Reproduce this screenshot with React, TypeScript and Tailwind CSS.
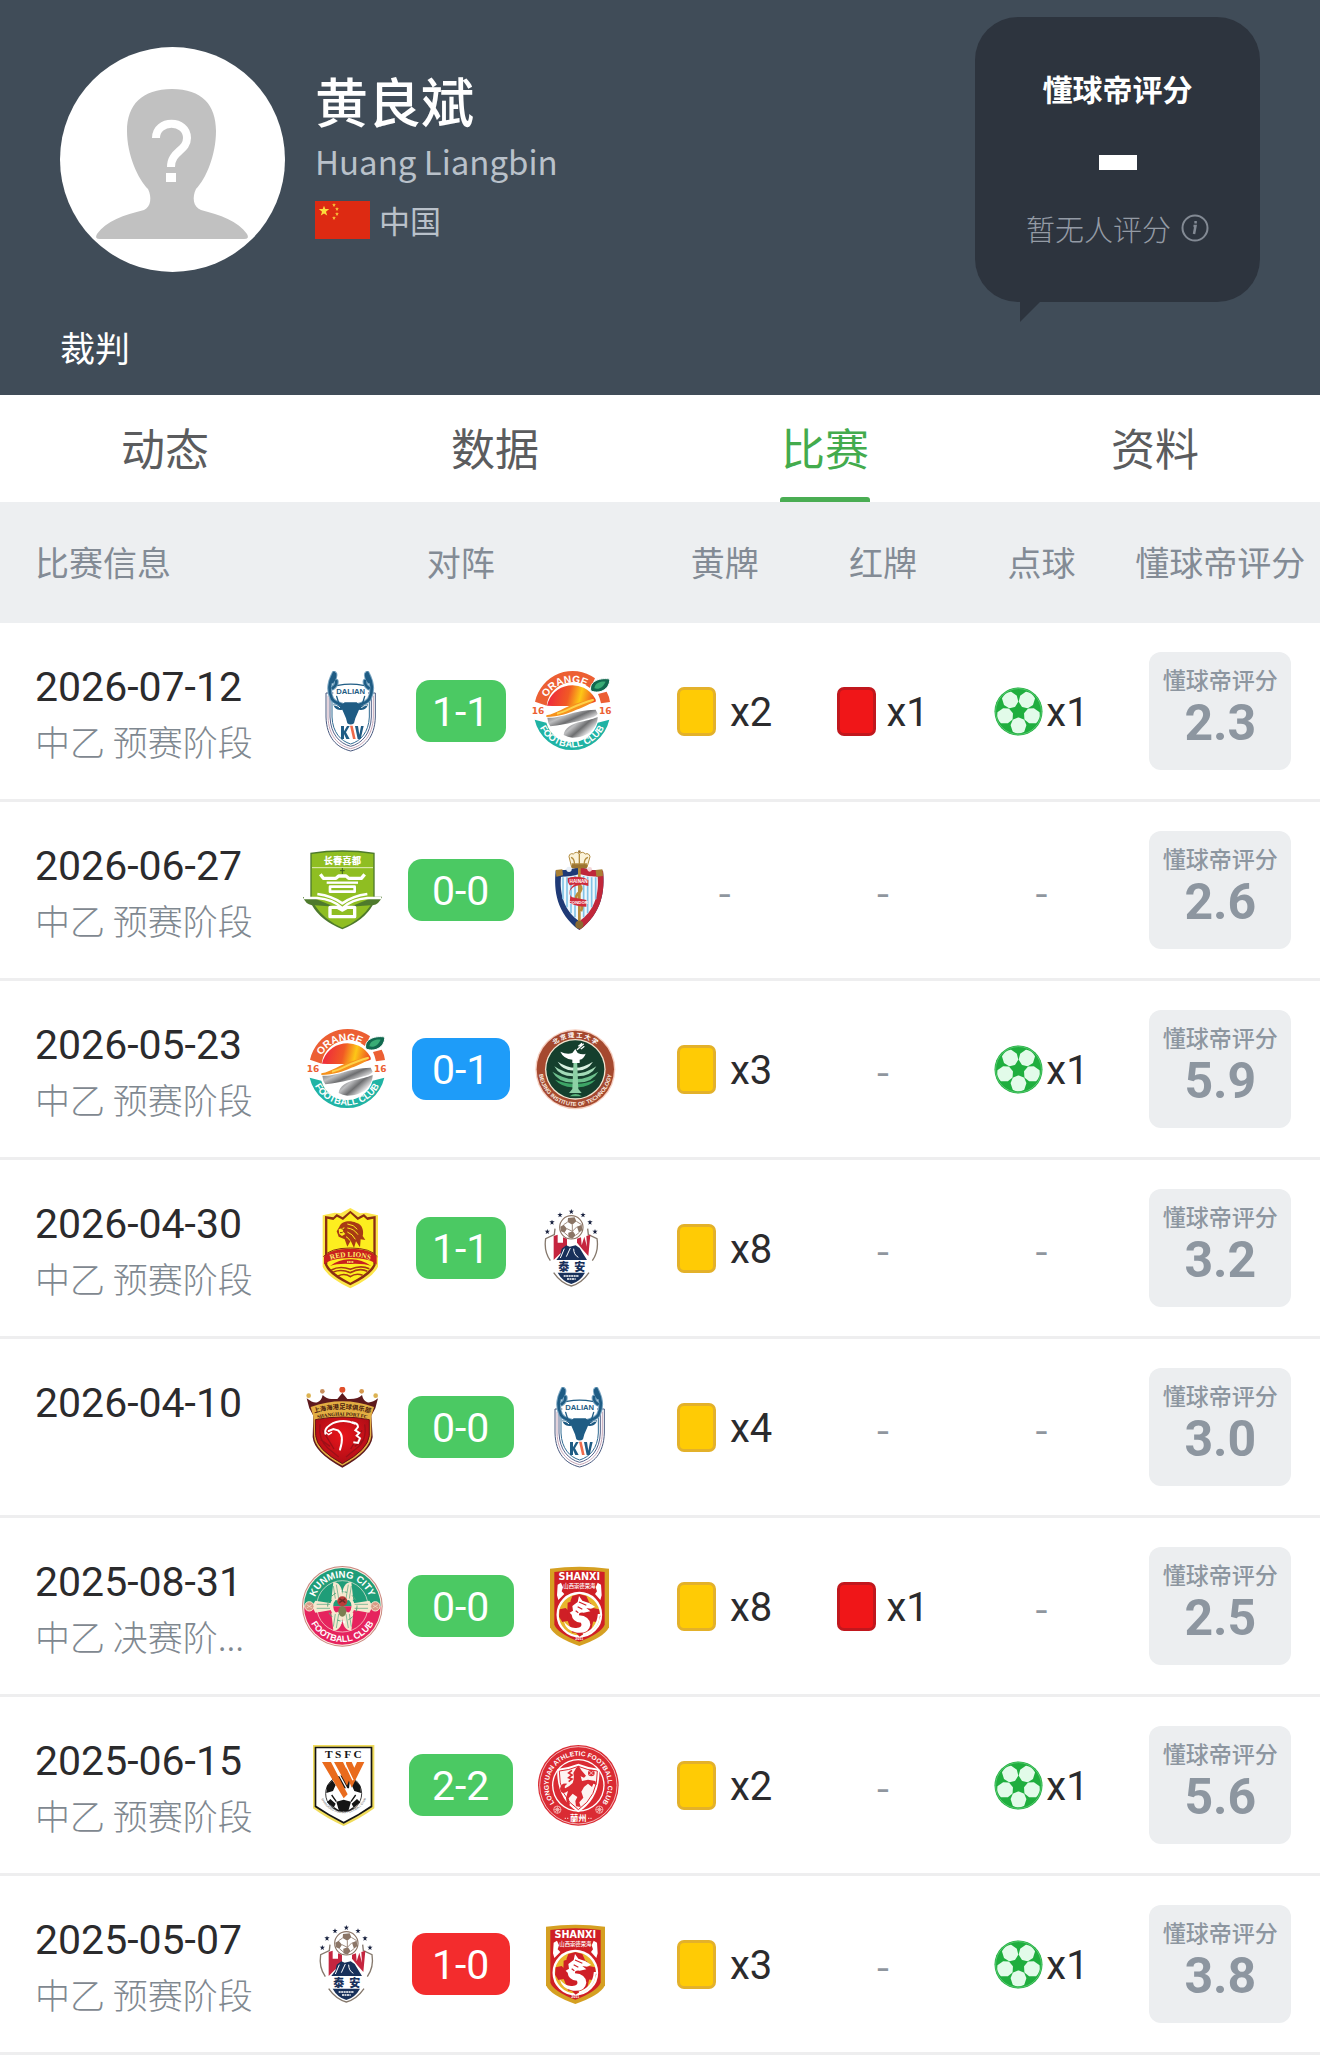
import { useId, type ReactNode } from 'react';

function Arc({ text, r, size, fill, cx = 121, cy = 121, bottom = false, family = 'Liberation Sans', weight = 700 }: {
  text: string; r: number; size: number; fill: string; cx?: number; cy?: number; bottom?: boolean; family?: string; weight?: number;
}) {
  const id = useId();
  const d = bottom
    ? `M${cx} ${cy - r}A${r} ${r} 0 0 0 ${cx} ${cy + r}A${r} ${r} 0 0 0 ${cx} ${cy - r}`
    : `M${cx} ${cy + r}A${r} ${r} 0 0 1 ${cx} ${cy - r}A${r} ${r} 0 0 1 ${cx} ${cy + r}`;
  return (
    <>
      <path id={id} d={d} fill="none" />
      <text fontSize={size} fontFamily={`${family}, Noto Sans CJK SC, sans-serif`} fontWeight={weight} fill={fill} textAnchor="middle">
        <textPath href={`#${id}`} startOffset="50%">{text}</textPath>
      </text>
    </>
  );
}

function Label({ x, y, size, fill, children, family = 'Liberation Sans', weight = 700 }: {
  x: number; y: number; size: number; fill: string; children: ReactNode; family?: string; weight?: number;
}) {
  return (
    <text x={x} y={y} fontSize={size} fill={fill} fontFamily={`${family}, Noto Sans CJK SC, sans-serif`} fontWeight={weight} textAnchor="middle">
      {children}
    </text>
  );
}

function Crest({ label, children }: { label: string; children: ReactNode }) {
  return (
    <svg viewBox="0 0 243 243" className="size-[81px] shrink-0" role="img" aria-label={label}>
      {children}
    </svg>
  );
}

function Dalian() {
  const antlers = 'M72 6C58 32 54 60 66 84C74 96 90 100 104 104M75 9C76 18 74 25 68 32M79 30C80 38 76 46 68 51M172 6C186 32 190 60 178 84C170 96 154 100 140 104M169 9C168 18 170 25 176 32M165 30C164 38 168 46 176 51';
  return (
    <Crest label="Dalian">
      <path d="M48 66H196V138C194 200 164 230 122 240C80 230 50 200 48 138Z" fill="#fff" />
      <path d="M48 66H70M174 66H196V138C194 200 164 230 122 240C80 230 50 200 48 138V66" fill="none" stroke="#49597f" strokeWidth="3" />
      <path d="M54 74V138C56 194 84 224 122 233C160 224 188 194 190 138V74" fill="none" stroke="#c6a4b6" strokeWidth="3" />
      <path d="M60 80V138C62 189 88 217 122 226C156 217 182 189 184 138V80" fill="none" stroke="#54628b" strokeWidth="3" />
      <path d="M66 90V138C68 184 92 210 122 219C152 210 176 184 178 138V90" fill="none" stroke="#2f6a92" strokeWidth="3" />
      <path d={antlers} fill="none" stroke="#7ba6c2" strokeWidth="14" strokeLinecap="round" strokeLinejoin="round" />
      <g fill="none" stroke="#1f5c84" strokeWidth="8" strokeLinecap="round" strokeLinejoin="round">
        <path d={antlers} />
        <path d="M84 43Q122 36 160 43M80 76L86 96M164 76L158 96" strokeWidth="4" />
      </g>
      <Label x={122} y={70} size={23} fill="#1f5c84">DALIAN</Label>
      <path d="M104 94H140L152 104L174 99C172 112 162 119 147 116L136 142L132 157Q122 164 112 157L108 142L97 116C82 119 72 112 70 99L92 104Z" fill="#1f5c84" />
      <path d="M72 102C80 103 86 106 90 111M172 102C164 103 158 106 154 111" stroke="#fff" strokeWidth="3" fill="none" />
      <path d="M93 165H102V181L111 165H119L108 184L119 204H109L102 189V204H93Z" fill="#1f5c84" />
      <path d="M120 164H128L137 204H129Z" fill="#ef6a4a" />
      <path d="M135 165H144L148 191L153 165H161L152 204H143Z" fill="#1f5c84" />
    </Crest>
  );
}

function Orange() {
  const a = useId();
  const b = useId();
  return (
    <Crest label="Orange Football Club">
      <defs>
        <linearGradient id={a} x1="0" y1="0.3" x2="1" y2="0.4">
          <stop offset="0.1" stopColor="#ee2f3b" />
          <stop offset="0.45" stopColor="#f15a24" />
          <stop offset="0.7" stopColor="#fdc716" />
          <stop offset="1" stopColor="#ee4d23" />
        </linearGradient>
        <linearGradient id={b} x1="0" y1="0" x2="1" y2="0.7">
          <stop offset="0" stopColor="#4a4a4c" />
          <stop offset="0.4" stopColor="#bdbec0" />
          <stop offset="0.6" stopColor="#6d6e70" />
          <stop offset="0.85" stopColor="#e6e6e7" />
          <stop offset="1" stopColor="#77787a" />
        </linearGradient>
      </defs>
      <path d="M12 92A116 119 0 0 1 192 22L178 52A80 80 0 0 0 47 104Z" fill="#ec5f33" />
      <path d="M201 69L227 62Q235 76 237 93L210 97Q207 82 201 69Z" fill="#ec5f33" />
      <path d="M11 146L46 155A80 80 0 0 0 200 155L235 146A115 118 0 0 1 11 146Z" fill="#20b3a4" />
      <path d="M48 104A78 78 0 0 1 192 82Q196 88 194 92C160 105 130 106 98 105Q72 106 48 104Z" fill={`url(#${a})`} />
      <path d="M46 133C80 126 100 108 132 98C156 92 180 84 190 84C184 98 160 108 136 116C110 128 84 136 46 138Z" fill="#f6921e" />
      <path d="M78 128C110 120 134 100 188 86" stroke="#fdd24b" strokeWidth="6" fill="none" />
      <path d="M49 140C100 142 120 118 194 116L200 128Q196 136 180 140C150 148 110 160 58 166Q50 156 49 140Z" fill={`url(#${b})`} />
      <path d="M98 192C100 170 122 158 150 152C172 148 192 142 200 138C200 170 172 200 124 200Q110 198 98 192Z" fill={`url(#${b})`} />
      <g transform="rotate(-16 123 122)">
        <Arc text="ORANGE" r={87} size={31} fill="#fff" cx={123} cy={122} />
      </g>
      <Arc text="FOOTBALL CLUB" r={109} size={28} fill="#fff" cx={123} cy={120} bottom />
      <Label x={21} y={130} size={27} fill="#ec5f33" family="DejaVu Sans">16</Label>
      <Label x={223} y={130} size={27} fill="#ec5f33" family="DejaVu Sans">16</Label>
      <path d="M180 60C172 36 200 18 236 24C238 50 210 72 180 60Z" fill="#11694f" stroke="#fff" strokeWidth="3" />
      <path d="M190 52C192 36 208 30 224 32C216 48 206 56 190 52Z" fill="#38ac75" />
    </Crest>
  );
}

function Changchun() {
  return (
    <Crest label="长春喜都">
      <path d="M25 8Q121 -6 218 8V140H240Q232 162 212 166Q186 212 121 238Q56 212 30 166Q10 162 3 141H25Z" fill="#4e7a2c" />
      <path d="M29 12Q121 -1 214 12V142L121 180L29 142Z" fill="#8fbe22" />
      <path d="M38 166L121 172L206 166Q176 212 121 233Q68 212 38 166Z" fill="#8fbe22" />
      <path d="M30 53H213" stroke="#f2f8d8" strokeWidth="2.5" />
      <Label x={121} y={42} size={28} fill="#fff" weight={900} family="Noto Sans CJK SC">长春喜都</Label>
      <g fill="none" stroke="#fff" strokeWidth="10" strokeLinejoin="round">
        <path d="M55 73L64 85H102L110 78H132L140 85H178L188 73" />
        <path d="M74 98H168" strokeWidth="7" />
        <path d="M84 110H158V125H84Z" strokeWidth="8" />
        <path d="M46 132Q90 138 121 160Q152 138 196 132" strokeWidth="8" />
        <path d="M6 144H46Q92 148 121 174Q150 148 196 144H237" strokeWidth="7" />
        <path d="M84 172V200H158V172H136L121 180L106 172Z" />
      </g>
      <path d="M121 54V72M114 62H128" stroke="#3f6222" strokeWidth="3" />
    </Crest>
  );
}

function Hainan() {
  return (
    <Crest label="Hainan Condor">
      <path d="M50 62Q86 62 121 52Q156 62 192 62C198 120 190 190 121 240C52 190 44 120 50 62Z" fill="#1f3a76" />
      <path d="M121 52Q156 62 192 62C198 120 190 190 121 240Z" fill="#c0273a" />
      <path d="M66 80Q98 80 121 72Q146 80 176 80C180 128 170 178 121 214C72 178 62 128 66 80Z" fill="#eef7fc" />
      <path d="M72 82V148M84 82V172M96 80V190M108 78V202M134 78V202M146 80V190M158 82V172M170 82V148" stroke="#83c3e6" strokeWidth="5" />
      <path d="M54 62L100 58V72L64 80Q52 76 54 62Z" fill="#1f3a76" />
      <path d="M50 60L70 58L72 76L52 80ZM170 60L190 58L192 78L172 80Z" fill="#a87f34" />
      <circle cx="90" cy="58" r="8" fill="#e8eef6" />
      <circle cx="152" cy="58" r="7" fill="#f2d4d6" />
      <path d="M117 54H125V220H117Z" fill="#b98d3a" />
      <path d="M112 100Q134 108 124 124Q104 138 116 156Q136 160 126 184" fill="none" stroke="#b98d3a" strokeWidth="8" />
      <path d="M86 84Q122 74 148 90V108Q122 98 92 106Q84 96 86 84Z" fill="#cf2c3b" />
      <path d="M130 104C96 106 82 128 100 142L142 150V170Q112 170 92 158L94 138Q82 118 112 100Z" fill="#cf2c3b" />
      <Label x={119} y={98} size={14} fill="#fff">HAINAN</Label>
      <Label x={118} y={163} size={13} fill="#fff">CONDOR</Label>
      <circle cx="121" cy="224" r="12" fill="#8a6a31" />
      <path d="M98 52L90 20Q92 8 103 12Q112 2 121 12Q130 2 139 12Q150 8 153 20L144 52Z" fill="#fbf3da" stroke="#b28b3e" strokeWidth="3" />
      <path d="M96 22Q108 26 106 46M121 12V46M147 22Q134 26 136 46M98 42H144" stroke="#b28b3e" strokeWidth="4" fill="none" />
      <rect x="98" y="43" width="46" height="12" rx="3" fill="#9c7430" />
      <circle cx="121" cy="5" r="4" fill="#9c7430" />
    </Crest>
  );
}

function Beijing() {
  return (
    <Crest label="Beijing Institute of Technology">
      <circle cx="121" cy="121" r="120" fill="#f6cfc0" />
      <circle cx="121" cy="121" r="116" fill="#a5492f" />
      <circle cx="121" cy="121" r="91" fill="#f3e6d2" />
      <circle cx="121" cy="121" r="87" fill="#153f2d" />
      <Arc text="北 京 理 工 大 学" r={96} size={19} fill="#fff" family="Noto Sans CJK SC" />
      <Arc text="BEIJING INSTITUTE OF TECHNOLOGY" r={110} size={17} fill="#fbeee2" bottom />
      <path d="M68 98Q96 116 121 116Q146 116 174 98Q156 128 121 124Q86 128 68 98Z" fill="#d8f0e0" />
      <path d="M58 112Q90 134 121 134Q152 134 184 112Q168 144 121 142Q74 144 58 112Z" fill="#a3dbb8" />
      <path d="M52 128Q90 152 121 150Q152 152 190 128Q170 164 121 160Q72 164 52 128Z" fill="#6dc08d" />
      <path d="M60 152Q96 166 121 164Q146 166 182 152Q158 178 121 174Q84 178 60 152Z" fill="#3da566" />
      <path d="M116 90H126L130 180L140 192H102L112 180Z" fill="#8cd0a5" />
      <path d="M104 202Q121 188 140 202Z" fill="#5ab57c" />
      <path d="M76 68Q96 78 112 72L121 60L128 72Q142 78 152 74Q146 90 134 92V102H112V92Q86 90 76 68Z" fill="#fff" />
      <path d="M126 62L146 44M130 52L138 46M138 60L148 52M134 58L140 42" stroke="#fff" strokeWidth="4" />
    </Crest>
  );
}

function RedLions() {
  return (
    <Crest label="Red Lions">
      <path d="M121 0L150 16L168 14L204 22V176Q190 208 121 241Q52 208 38 176V22L74 14L92 16Z" fill="#fce64a" />
      <path d="M121 8L144 28L162 18L172 28L197 24V172Q184 202 121 232Q58 202 45 172V24L70 28L80 18L98 28Z" fill="#8a2f12" />
      <path d="M121 16L143 36L161 26L172 36L190 32V170Q176 196 121 224Q66 196 52 170V32L70 36L81 26L99 36Z" fill="#fdee1f" />
      <path d="M88 56C94 38 122 36 138 44C158 48 162 70 158 84L166 96L152 94L150 118L138 100L132 120L122 98L112 116L104 94L86 86L80 70Z" fill="#a83a14" />
      <path d="M86 64L104 58L98 70L106 78L96 84L88 78Z" fill="#fdee1f" />
      <path d="M112 48Q132 50 142 64M112 60Q132 62 144 80M112 72Q128 78 136 94M108 86Q116 90 120 98" fill="none" stroke="#fdee1f" strokeWidth="3" />
      <path d="M94 62L104 65M90 74H98" stroke="#8a2f12" strokeWidth="3" />
      <path d="M42 146Q60 122 121 122Q182 122 200 146V170Q180 150 121 150Q62 150 42 170Z" fill="#c8201f" />
      <path d="M40 146Q60 120 121 120Q182 120 202 146" fill="none" stroke="#8a2f12" strokeWidth="3" />
      <Arc text="RED LIONS" r={190} size={22} fill="#fff06a" cy={336} family="Liberation Serif" />
      <path d="M60 174Q90 152 121 154Q152 152 184 174Q160 166 121 168Q82 166 60 174Z" fill="#c8201f" />
      <path d="M64 186Q90 172 121 184Q152 170 178 182M70 192Q94 182 121 194Q150 178 172 190M84 204Q104 194 121 206Q138 194 158 202" stroke="#a83a14" strokeWidth="5" fill="none" />
      <path d="M111 162H131" stroke="#fff06a" strokeWidth="5" strokeDasharray="4 1" />
    </Crest>
  );
}

const STAR = 'M0 -8L2 -3L8 -3L3 1L5 7L0 4L-5 7L-3 1L-8 -3L-2 -3Z';

function Taian() {
  return (
    <Crest label="泰安">
      {[[49, 71], [63, 43], [87, 21], [121, 11], [156, 21], [177, 43], [192, 71]].map(([x, y]) => (
        <path key={x} d={STAR} transform={`translate(${x} ${y})`} fill="#1a2340" />
      ))}
      <path d="M72 62L70 80L44 92Q38 130 58 158M170 62L172 80L198 92Q204 130 184 158M68 194Q90 226 121 234Q152 226 174 194" fill="none" stroke="#85786c" strokeWidth="4" />
      <path d="M68 84L80 80V104H96V88L108 92V116L68 156ZM138 92L150 88L152 112L160 86L168 116L166 84L178 80L172 144L156 126L138 104Z" fill="#c5253f" />
      <circle cx="121" cy="58" r="35" fill="#fff" stroke="#8b7566" strokeWidth="3.5" />
      <path d="M111 30L131 28L136 40L124 50L110 42ZM88 56L98 50L108 62L100 74L90 70ZM138 56L152 50L154 66L144 74ZM112 74L126 70L134 82L124 92L112 88Z" fill="#8b7566" />
      <path d="M124 50V70M110 42L98 50M136 40L152 50M108 62L124 70M138 56L124 70M100 74L112 84M144 74L134 82" stroke="#8b7566" strokeWidth="2.5" />
      <path d="M76 156L88 140L92 122L106 112L116 116L134 112L146 120L162 146L168 156Z" fill="#18305a" />
      <path d="M88 150L100 122M106 146L118 120M128 122Q128 140 142 148" stroke="#fff" strokeWidth="3" fill="none" />
      <Label x={98} y={189} size={33} fill="#18305a" weight={900} family="Noto Sans CJK SC">泰</Label>
      <Label x={146} y={189} size={33} fill="#18305a" weight={900} family="Noto Sans CJK SC">安</Label>
      <path d="M80 194H162Q148 220 121 228Q94 220 80 194Z" fill="#18305a" />
      <path d="M98 204H144M108 213H134" stroke="#fff" strokeWidth="4" strokeDasharray="6 1.5" />
    </Crest>
  );
}

function ShanghaiPort() {
  const g = useId();
  return (
    <Crest label="Shanghai Port FC">
      <defs>
        <radialGradient id={g} cx="0.5" cy="0.4" r="0.6">
          <stop offset="0" stopColor="#e8151b" />
          <stop offset="1" stopColor="#b00d16" />
        </radialGradient>
      </defs>
      <path d="M14 34Q34 50 46 46Q58 42 62 24Q76 38 92 36L106 36L121 18L136 36Q168 38 180 24Q184 42 196 46Q212 48 228 34L220 64L208 86L212 150Q206 196 121 242Q36 196 32 150L34 86L22 64Z" fill="#5e1a1d" />
      <path d="M26 60Q121 26 216 60L208 88L208 146Q204 192 121 236Q38 192 36 146L34 88Z" fill="#e2ae42" />
      <path d="M40 98Q121 82 202 98V146Q198 188 121 230Q44 188 41 146Z" fill={`url(#${g})`} stroke="#6b1414" strokeWidth="3" />
      <path d="M54 112Q48 158 78 184L110 210M62 130L96 186M188 112Q196 158 164 184L132 210M180 130L146 186M56 158L84 178M186 158L158 178" stroke="#9c1017" strokeWidth="4" fill="none" />
      <path d="M70 140Q66 126 84 114Q108 98 142 104L158 110M80 132L94 126L108 130Q128 144 114 188" stroke="#fff" strokeWidth="6" fill="none" strokeLinecap="round" />
      <path d="M71 136L80 143L90 136" stroke="#fff" strokeWidth="4" fill="none" />
      <path d="M150 106Q168 108 168 120L160 130L172 138L164 146L174 154L168 168L154 166" stroke="#fff" strokeWidth="6" fill="none" />
      <circle cx="121" cy="8" r="9" fill="#e0502c" />
      <circle cx="61" cy="13" r="7" fill="#c88e5c" />
      <circle cx="179" cy="13" r="7" fill="#d6984c" />
      <circle cx="20" cy="26" r="7" fill="#dcb353" />
      <circle cx="221" cy="26" r="7" fill="#dcb353" />
      <Arc text="上海海港足球俱乐部" r={290} size={19} fill="#4a1a0e" cy={356} family="Noto Sans CJK SC" />
      <Arc text="SHANGHAI PORT FC" r={330} size={15} fill="#3a120c" cy={416} family="Liberation Serif" />
    </Crest>
  );
}

function Kunming() {
  const wing = 'M120 92Q122 48 148 48L154 102Q138 100 128 108Z';
  return (
    <Crest label="Kunming City Football Club">
      <circle cx="121" cy="121" r="121" fill="#c9867d" />
      <circle cx="121" cy="121" r="118" fill="#fbeee4" />
      <path d="M6 121A115 115 0 0 1 236 121Z" fill="#1f9d78" />
      <path d="M6 121A115 115 0 0 0 236 121Z" fill="#e6235e" />
      <circle cx="121" cy="121" r="77" fill="none" stroke="#f9ecdc" strokeWidth="2" />
      <Arc text="KUNMING CITY" r={86} size={29} fill="#fff" />
      <Arc text="FOOTBALL CLUB" r={107} size={27} fill="#fff" bottom />
      <g fill="#f6e8cf">
        <path d={wing} />
        <path d={wing} transform="translate(242 0) scale(-1 1)" />
        <path d={wing} transform="translate(0 242) scale(1 -1)" />
        <path d={wing} transform="translate(242 242) scale(-1 -1)" />
        <path d="M40 104L88 112V132L40 140L30 121Z" />
        <path d="M202 104L154 112V132L202 140L212 121Z" />
      </g>
      <circle cx="121" cy="121" r="32" fill="none" stroke="#f6e8cf" strokeWidth="9" />
      <circle cx="121" cy="121" r="44" fill="none" stroke="#5aa87a" strokeWidth="3" strokeDasharray="16 18" />
      <path d="M139 56L132 98M148 60L142 98M103 56L110 98M94 60L100 98M139 186L132 144M148 182L142 144M103 186L110 144M94 182L100 144M44 115H84M44 127H84M158 115H198M158 127H198" stroke="#4aa37c" strokeWidth="2" />
      <ellipse cx="121" cy="106" rx="15" ry="15" fill="#bb3b39" />
      <ellipse cx="121" cy="136" rx="12" ry="16" fill="#7b7e50" />
      <path d="M112 98L130 110M130 98L112 110" stroke="#6e2a29" strokeWidth="4" />
      <circle cx="22" cy="121" r="14" fill="#d99a86" stroke="#f6e8cf" strokeWidth="3" />
      <circle cx="220" cy="121" r="14" fill="#d99a86" stroke="#f6e8cf" strokeWidth="3" />
      <path d="M14 116L30 126M30 116L14 126M212 116L228 126M228 116L212 126" stroke="#f6e8cf" strokeWidth="2" />
      <path d="M116 72V80M126 72V80M115 164H119V168H115V172H119M124 164V169H129M128 164V173" stroke="#fff" strokeWidth="2.5" fill="none" />
    </Crest>
  );
}

function Shanxi() {
  return (
    <Crest label="Shanxi">
      <path d="M33 8Q121 -4 210 8V184Q196 214 121 240Q46 214 33 184Z" fill="#d5a022" />
      <path d="M46 18Q121 8 197 18V176Q186 202 121 227Q56 202 46 176Z" fill="#cf1f26" />
      <Label x={121} y={41} size={29} fill="#fff" family="DejaVu Sans">SHANXI</Label>
      <Label x={121} y={67} size={16} fill="#fff" weight={500} family="Noto Sans CJK SC">山西崇德荣海</Label>
      <path d="M56 56L66 50L72 64L68 76L76 84L58 102L54 88ZM186 56L176 50L170 64L174 76L168 84L184 102L188 88Z" fill="#fff" />
      <circle cx="121" cy="146" r="65" fill="#e8b62c" stroke="#fff" strokeWidth="7" />
      <path d="M121 84L142 90L150 108L130 122H112L94 106L100 90ZM62 130L80 126L96 142L90 164L70 168L60 152ZM180 130L162 126L150 140L156 166L174 168L184 152Z" fill="#cf1f26" />
      <path d="M92 182L112 166L140 172L150 192L122 212Z" fill="#cf1f26" />
      <path d="M86 110L120 98L156 112L166 150L156 196L100 200L84 160Z" fill="#cf1f26" />
      <path d="M100 120L116 108L120 90L130 104L152 112L168 122L156 128L142 126L154 136L134 140Q118 138 120 148Q152 150 154 176Q150 204 114 200Q82 196 74 166Q90 188 112 186Q132 184 126 170Q100 168 98 146L92 140L102 134Z" fill="#fff" />
      <path d="M120 108L142 118M116 122L130 130M110 134L118 140" stroke="#cf1f26" strokeWidth="3.5" />
      <path d="M132 206Q176 192 180 144" stroke="#fff" strokeWidth="7" fill="none" />
      <Label x={121} y={222} size={11} fill="#fff">2011</Label>
    </Crest>
  );
}

function Tsfc() {
  return (
    <Crest label="TSFC">
      <path d="M30 0H214V190Q170 222 122 243Q74 222 30 190Z" fill="#f0dc5c" />
      <path d="M35 5H208V186Q166 214 122 236Q78 214 35 186Z" fill="#151515" />
      <path d="M40 10H203V182Q164 210 122 230Q80 210 40 182Z" fill="#fff" />
      <circle cx="122" cy="146" r="54" fill="#fff" stroke="#151515" strokeWidth="2.5" />
      <path d="M72 122L88 106L98 120L90 138L70 144ZM172 122L156 106L146 120L154 138L174 144ZM122 164L144 170L136 198L108 198L100 170ZM72 172L82 162L98 176L92 188ZM172 172L162 162L146 176L152 188ZM104 96L124 90L142 98L138 130H108Z" fill="#151515" />
      <path d="M100 170L86 150M144 170L158 150M108 198L92 188M136 198L152 188" stroke="#151515" strokeWidth="4" />
      <path d="M57 51H84L134 148L122 160ZM93 51H120L142 96L132 122ZM129 51H146L154 68L162 51H184L146 128L132 92Z" fill="#e96b1d" />
      <path d="M88 51L142 150M124 51L150 106" stroke="#fff" strokeWidth="4" />
      <Label x={121} y={38} size={34} fill="#151515" family="Liberation Serif">T S F C</Label>
      <Arc text="SHANDONG TAISHAN FOOTBALL CLUB" r={73} size={9} fill="#555" cx={122} cy={132} bottom weight={400} />
    </Crest>
  );
}

function Longyuan() {
  return (
    <Crest label="Longyuan Athletic Football Club">
      <circle cx="121" cy="121" r="121" fill="#da2b33" />
      <circle cx="121" cy="121" r="116" fill="none" stroke="#fff" strokeWidth="2" />
      <circle cx="121" cy="121" r="79" fill="#fff" />
      <circle cx="121" cy="121" r="75" fill="#da2b33" />
      <Arc text="LONGYUAN ATHLETIC FOOTBALL CLUB" r={89} size={20} fill="#fff" />
      <path d="M58 72Q90 68 121 56Q152 68 184 72Q188 160 121 202Q54 160 58 72Z" fill="#fff" />
      <path d="M64 78Q92 76 121 64Q150 76 178 78Q180 154 121 194Q62 154 64 78Z" fill="#fdf4f2" stroke="#da2b33" strokeWidth="3" />
      <path d="M114 70L122 62L130 76L144 92L138 98L128 94L132 108L150 104L172 108L176 120L166 116L162 126L150 116L138 126L130 140L136 158L124 172L128 186L114 184L112 168L118 156L104 146L92 160L96 178L88 184L84 160L90 138Q70 152 66 132Q68 112 88 116Q76 124 82 130Q92 126 104 114Q110 98 106 84Z" fill="#da2b33" />
      <path d="M102 76L92 84L102 90L92 98L102 102L92 110" stroke="#da2b33" strokeWidth="5" fill="none" />
      <circle cx="160" cy="84" r="10" fill="#da2b33" />
      <path d="M154 78L166 90M166 78L154 90" stroke="#fff" strokeWidth="2" />
      {[[58, 194], [184, 194]].map(([x, y]) => (
        <g key={x} fill="none" stroke="#f4b9b6" strokeWidth="2.5">
          <circle cx={x} cy={y} r="11" />
          <circle cx={x} cy={y} r="4" />
          <path d={`M${x - 11} ${y}H${x + 11}M${x} ${y - 11}V${y + 11}M${x - 7} ${y - 7}L${x + 7} ${y + 7}M${x + 7} ${y - 7}L${x - 7} ${y + 7}`} />
        </g>
      ))}
      <Label x={121} y={229} size={25} fill="#fff" family="Noto Sans CJK TC">蘭州</Label>
      <path d="M80 220H92M150 220H162" stroke="#f4b9b6" strokeWidth="4" strokeDasharray="4 3" />
    </Crest>
  );
}

function Ball() {
  return (
    <svg viewBox="0 0 50 50" className="size-[49px] shrink-0" aria-hidden="true">
      <circle cx="25" cy="25" r="24.5" fill="#1fae3e" />
      <circle cx="25" cy="25" r="23.4" fill="none" stroke="#62cf7a" strokeWidth="0.8" />
      {[0, 72, 144, 216, 288].map((a) => (
        <path
          key={a}
          transform={`rotate(${a} 25 25)`}
          d="M20 34L25 32L30 34L32 39L30 45Q25 47.500 20 45L18 39Z"
          fill="#e2fbe9"
          stroke="#e2fbe9"
          strokeWidth="2"
          strokeLinejoin="round"
        />
      ))}
    </svg>
  );
}

function Flag() {
  return (
    <svg viewBox="0 0 55 38" className="h-[38px] w-[55px] shrink-0" role="img" aria-label="中国国旗">
      <rect width="55" height="38" fill="#dd2a12" />
      <path d={STAR} transform="translate(9 10) scale(0.65)" fill="#fbdc3c" />
      {[[19, 4], [22, 8], [22, 13], [19, 17]].map(([x, y]) => (
        <path key={y} d={STAR} transform={`translate(${x} ${y}) scale(0.24)`} fill="#fbc93c" />
      ))}
    </svg>
  );
}

function Avatar() {
  return (
    <svg viewBox="0 0 225 225" className="size-[225px] shrink-0" role="img" aria-label="头像">
      <circle cx="112.500" cy="112.500" r="112.500" fill="#fff" />
      <path d="M112 42C82 42 67 58 67 84C67 108 78 132 88 142C92 150 91 160 84 163C64 168 46 174 37 187Q34 192 40 192H184Q190 192 187 187C178 174 160 168 141 163C133 160 132 150 136 142C146 132 156 108 156 84C156 58 142 42 112 42Z" fill="#c1c1c1" />
      <path d="M96 91C96 72 127 72 127 91C127 104 111 104 111 120" fill="none" stroke="#fff" strokeWidth="8" />
      <rect x="106" y="126" width="10" height="9" fill="#fff" />
    </svg>
  );
}

type Match = {
  date: string; stage: string; home: () => ReactNode; away: () => ReactNode;
  score: string; badge: string; yellow?: number; red?: number; penalty?: number; rating: string;
};

const MATCHES: Match[] = [
  { date: '2026-07-12', stage: '中乙 预赛阶段', home: Dalian, away: Orange, score: '1-1', badge: 'w-[90px] bg-[#4bc963]', yellow: 2, red: 1, penalty: 1, rating: '2.3' },
  { date: '2026-06-27', stage: '中乙 预赛阶段', home: Changchun, away: Hainan, score: '0-0', badge: 'w-[106px] bg-[#4bc963]', rating: '2.6' },
  { date: '2026-05-23', stage: '中乙 预赛阶段', home: Orange, away: Beijing, score: '0-1', badge: 'w-[98px] bg-[#1e9cf9]', yellow: 3, penalty: 1, rating: '5.9' },
  { date: '2026-04-30', stage: '中乙 预赛阶段', home: RedLions, away: Taian, score: '1-1', badge: 'w-[90px] bg-[#4bc963]', yellow: 8, rating: '3.2' },
  { date: '2026-04-10', stage: '', home: ShanghaiPort, away: Dalian, score: '0-0', badge: 'w-[106px] bg-[#4bc963]', yellow: 4, rating: '3.0' },
  { date: '2025-08-31', stage: '中乙 决赛阶...', home: Kunming, away: Shanxi, score: '0-0', badge: 'w-[106px] bg-[#4bc963]', yellow: 8, red: 1, rating: '2.5' },
  { date: '2025-06-15', stage: '中乙 预赛阶段', home: Tsfc, away: Longyuan, score: '2-2', badge: 'w-[104px] bg-[#4bc963]', yellow: 2, penalty: 1, rating: '5.6' },
  { date: '2025-05-07', stage: '中乙 预赛阶段', home: Taian, away: Shanxi, score: '1-0', badge: 'w-[98px] bg-[#f32c2d]', yellow: 3, penalty: 1, rating: '3.8' },
];

const TABS = ['动态', '数据', '比赛', '资料'];

function Stat({ value, children, gap }: { value?: number; children: ReactNode; gap: string }) {
  if (!value) {
    return (
      <td className="border-b-3 border-[#eeeeef] p-0 text-center text-[40px] leading-[48px] text-[#8f969e]">-</td>
    );
  }
  return (
    <td className="border-b-3 border-[#eeeeef] p-0">
      <div className={`flex items-center justify-center ${gap}`}>
        {children}
        <span className="pt-[3px] font-[Roboto,sans-serif] text-[40px] leading-[48px] text-[#2b2b2d]">x{value}</span>
      </div>
    </td>
  );
}

function Row({ m }: { m: Match }) {
  const Home = m.home;
  const Away = m.away;
  return (
    <tr className="h-[179px]">
      <td className="border-b-3 border-[#eeeeef] pt-[3px] pr-0 pb-0 pl-[35px]">
        <div className="font-[Roboto,sans-serif] text-[41px] leading-[56px] whitespace-nowrap text-[#2b2b2d]">{m.date}</div>
        <div className="h-[52px] text-[35px] leading-[52px] font-light whitespace-nowrap text-[#7f8890]">{m.stage}</div>
      </td>
      <td className="border-b-3 border-[#eeeeef] p-0">
        <div className="flex items-center justify-center gap-[25px]">
          <Home />
          <span className={`flex h-[62px] items-center justify-center rounded-[14px] pt-[3px] font-[Roboto,sans-serif] text-[41px] text-white ${m.badge}`}>
            {m.score}
          </span>
          <Away />
        </div>
      </td>
      <Stat value={m.yellow} gap="gap-[14px]">
        <span className="h-[49px] w-[39px] rounded-[7px] border-3 border-[#e3b12a] bg-[#ffcb05]" />
      </Stat>
      <Stat value={m.red} gap="gap-[10px]">
        <span className="h-[49px] w-[39px] rounded-[7px] border-3 border-[#c1171d] bg-[#f01618]" />
      </Stat>
      <Stat value={m.penalty} gap="gap-[3px]">
        <Ball />
      </Stat>
      <td className="border-b-3 border-[#eeeeef] p-0">
        <div className="mx-auto flex h-[118px] w-[142px] flex-col items-center rounded-[12px] bg-[#eceef0] pt-[11px] text-[#8d96a0]">
          <span className="text-[23px] leading-[32px] font-medium whitespace-nowrap">懂球帝评分</span>
          <span className="pt-[2px] font-[Roboto,sans-serif] text-[50px] leading-[52px] font-bold">{m.rating}</span>
        </div>
      </td>
    </tr>
  );
}

export default function App() {
  return (
    <main className="min-h-screen bg-white font-['Noto_Sans_CJK_SC',sans-serif]">
      <header className="flex items-start justify-between bg-[#404c58] px-[60px] pb-[24px]">
        <div className="pt-[47px]">
          <div className="flex items-start gap-[30px]">
            <Avatar />
            <div className="pt-[17px]">
              <h1 className="text-[53px] leading-[72px] font-medium text-white">黄良斌</h1>
              <p className="text-[33px] leading-[50px] text-[#b9c1ca]">Huang Liangbin</p>
              <div className="mt-[6px] flex items-center gap-[9px]">
                <Flag />
                <span className="text-[31px] leading-[56px] text-[#b9c1ca]">中国</span>
              </div>
            </div>
          </div>
          <p className="mt-[51px] text-[35px] leading-[48px] text-white">裁判</p>
        </div>
        <section className="relative mt-[17px] flex h-[285px] w-[285px] flex-col items-center rounded-[43px] bg-[#2d343e] pt-[49px]">
          <h2 className="text-[30px] leading-[44px] font-bold text-white">懂球帝评分</h2>
          <div className="mt-[45px] h-[15px] w-[38px] bg-white" />
          <button type="button" className="mt-[36px] flex items-center gap-[10px] text-[29px] leading-[44px] font-light text-[#949ba5]">
            暂无人评分
            <svg viewBox="0 0 28 28" className="size-[28px]" aria-hidden="true" fill="none" stroke="#838a94">
              <circle cx="14" cy="14" r="12.500" strokeWidth="2" />
              <path d="M12.500 12H14.500L13 20M14.600 7V9.500" strokeWidth="2.500" />
            </svg>
          </button>
          <svg viewBox="0 0 20 20" className="absolute top-full left-[45px] size-[20px]" aria-hidden="true">
            <path d="M0 0H20L0 20Z" fill="#2d343e" />
          </svg>
        </section>
      </header>

      <nav className="grid h-[107px] grid-cols-4 bg-white">
        {TABS.map((t) => (
          <button
            key={t}
            type="button"
            aria-current={t === '比赛' ? 'page' : undefined}
            className={`flex flex-col items-center justify-between pt-[22px] text-[44px] leading-[60px] ${t === '比赛' ? 'text-[#43ab4d]' : 'text-[#5b5c5e]'}`}
          >
            {t}
            <span className={`h-[5px] w-[90px] rounded-t-[3px] ${t === '比赛' ? 'bg-[#4aad53]' : 'bg-transparent'}`} />
          </button>
        ))}
      </nav>

      <table className="w-full table-fixed border-separate border-spacing-0">
        <colgroup>
          <col className="w-[20.9%]" />
          <col className="w-[28%]" />
          <col className="w-[12%]" />
          <col className="w-[12%]" />
          <col className="w-[12%]" />
          <col />
        </colgroup>
        <thead>
          <tr className="h-[121px] bg-[#edeff1] text-[34px] whitespace-nowrap text-[#838b95]">
            <th className="pt-0 pr-0 pb-[3px] pl-[35px] text-left font-normal">比赛信息</th>
            <th className="px-0 pt-0 pb-[3px] font-normal">对阵</th>
            <th className="px-0 pt-0 pb-[3px] font-normal">黄牌</th>
            <th className="px-0 pt-0 pb-[3px] font-normal">红牌</th>
            <th className="px-0 pt-0 pb-[3px] font-normal">点球</th>
            <th className="px-0 pt-0 pb-[3px] font-normal">懂球帝评分</th>
          </tr>
        </thead>
        <tbody>
          {MATCHES.map((m) => (
            <Row key={m.date} m={m} />
          ))}
        </tbody>
      </table>
    </main>
  );
}
